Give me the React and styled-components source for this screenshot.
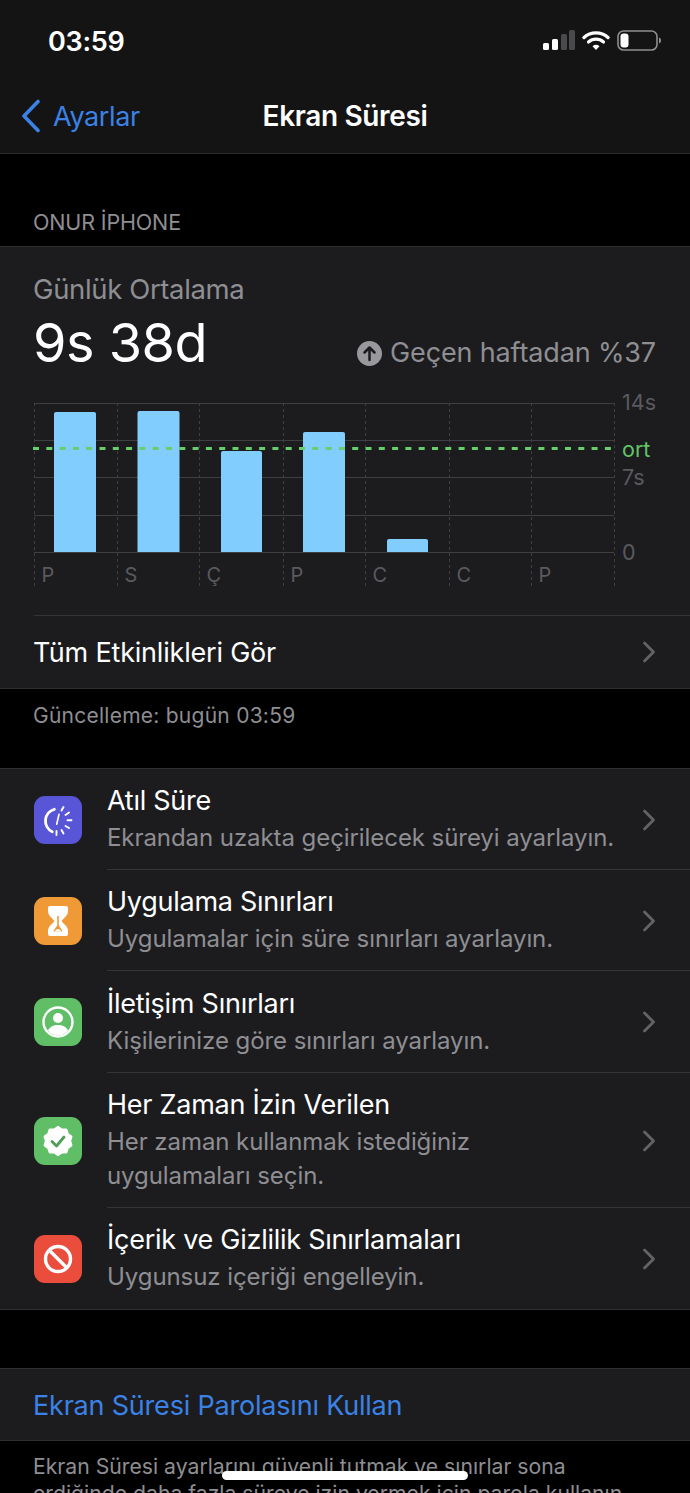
import React from "react";
import styled, { createGlobalStyle } from "styled-components";

const Global = createGlobalStyle`
  html, body { margin: 0; padding: 0; background: #000; }
  body { font-family: Inter, "Noto Sans", "Liberation Sans", sans-serif; -webkit-font-smoothing: antialiased; }
`;

const Page = styled.div`
  position: relative;
  width: 690px;
  height: 1493px;
  overflow: hidden;
  background: #000;
`;
const TopBar = styled.header`
  height: 153px;
  background: #141415;
  border-bottom: 1px solid #2c2c2e;
  display: flex;
  flex-direction: column;
`;
const StatusBar = styled.div`
  height: 82px;
  display: flex;
  align-items: center;
  justify-content: space-between;
  padding: 0 29px 0 48px;
`;
const Clock = styled.span`
  color: #fff;
  font-size: 27px;
  font-weight: 600;
  letter-spacing: -0.3px;
`;
const NavBar = styled.nav`
  position: relative;
  height: 70px;
  padding-bottom: 2px;
  box-sizing: border-box;
  display: flex;
  align-items: center;
  justify-content: center;
`;
const Back = styled.div`
  position: absolute;
  left: 21px;
  top: 17px;
  display: flex;
  align-items: center;
  gap: 12px;
  color: #3b82e6;
  font-size: 27px;
  letter-spacing: -0.4px;
`;
const NavTitle = styled.h1`
  margin: 0;
  color: #fff;
  font-size: 28px;
  font-weight: 600;
  letter-spacing: -0.35px;
`;
const SectionHead = styled.div`
  height: 92px;
  box-sizing: border-box;
  padding: 55px 33px 0;
  color: #8e8e93;
  font-size: 21.5px;
  line-height: 26px;
  letter-spacing: -0.15px;
`;
const Card = styled.section`
  background: #1c1c1e;
  border-top: 1px solid #2f2f31;
  border-bottom: 1px solid #2f2f31;
`;
const Summary = styled.div`
  padding: 25px 34px 0 33px;
`;
const Muted = styled.div`
  color: #8e8e93;
  font-size: 27.5px;
  line-height: 34px;
  letter-spacing: -0.36px;
`;
const SummaryRow = styled.div`
  display: flex;
  align-items: flex-end;
  justify-content: space-between;
  height: 67px;
`;
const BigTime = styled.div`
  color: #fff;
  font-size: 54px;
  line-height: 60px;
  font-weight: 400;
  letter-spacing: -0.5px;
`;
const Delta = styled.div`
  display: flex;
  align-items: center;
  gap: 8px;
  color: #8e8e93;
  font-size: 27px;
  line-height: 34px;
  letter-spacing: -0.15px;
  margin-bottom: 3px;
`;
const ChartWrap = styled.div`
  margin-top: 17px;
  height: 225px;
`;
const ChartSvg = styled.svg`
  display: block;
  font-family: Inter, "Noto Sans", sans-serif;
`;
const SeeAll = styled.div`
  margin-left: 34px;
  height: 72px;
  padding-right: 34px;
  border-top: 1px solid #343436;
  display: flex;
  align-items: center;
  justify-content: space-between;
  color: #fff;
  font-size: 27px;
  letter-spacing: -0.2px;
  text-indent: -1px;
`;
const Note = styled.div`
  height: 79px;
  box-sizing: border-box;
  padding: 14px 33px 0;
  color: #8e8e93;
  font-size: 21px;
  line-height: 26px;
  letter-spacing: 0.25px;
`;
const RowList = styled.section`
  background: #1c1c1e;
  border-top: 1px solid #2f2f31;
  border-bottom: 1px solid #2f2f31;
`;
const Row = styled.div`
  display: flex;
  align-items: center;
  box-sizing: border-box;
  height: ${(p) => p.$h}px;
  padding: 0 34px;
  position: relative;
  &:not(:last-child)::after {
    content: "";
    position: absolute;
    left: 107px;
    right: 0;
    bottom: 0;
    height: 1px;
    background: #343436;
  }
`;
const IconBox = styled.div`
  width: 48px;
  height: 48px;
  border-radius: 11px;
  background: ${(p) => p.$bg};
  display: flex;
  align-items: center;
  justify-content: center;
  flex: none;
`;
const RowText = styled.div`
  flex: 1;
  margin-left: 25px;
`;
const RowTitle = styled.div`
  color: #fff;
  font-size: 27px;
  line-height: 34px;
  letter-spacing: -0.26px;
`;
const RowSub = styled.div`
  color: #8e8e93;
  font-size: 24px;
  line-height: 34px;
  margin-top: 3px;
  letter-spacing: -0.07px;
  white-space: nowrap;
`;
const Gap = styled.div`
  height: 58px;
`;
const LinkRow = styled.div`
  height: 71px;
  box-sizing: border-box;
  padding: 2px 33px 0;
  display: flex;
  align-items: center;
  color: #3b82e6;
  font-size: 27px;
  letter-spacing: -0.2px;
`;
const Foot = styled.p`
  margin: 0;
  padding: 12px 33px 0;
  box-sizing: border-box;
  color: #8e8e93;
  font-size: 21.2px;
  line-height: 27px;
  white-space: nowrap;
`;
const HomeBar = styled.div`
  position: absolute;
  left: 222px;
  top: 1471px;
  width: 246px;
  height: 9px;
  border-radius: 5px;
  background: #fff;
`;

const Chevron = () => (
  <svg width="14" height="22" viewBox="0 0 14 22" fill="none">
    <path d="M2.5 2l9 9-9 9" stroke="#636366" strokeWidth="2.8" strokeLinecap="round" strokeLinejoin="round" />
  </svg>
);

const StatusIcons = () => (
  <svg width="118" height="24" viewBox="0 0 118 24" fill="none">
    <rect x="0" y="14" width="6" height="7" rx="1.5" fill="#fff" />
    <rect x="9" y="10" width="6" height="11" rx="1.5" fill="#fff" />
    <rect x="18" y="5" width="6" height="16" rx="1.5" fill="#4a4a4c" />
    <rect x="26" y="1" width="6" height="20" rx="1.5" fill="#4a4a4c" />
    <path d="M41 8.5a18 18 0 0 1 24 0" stroke="#fff" strokeWidth="3.4" strokeLinecap="round" />
    <path d="M45.5 13a11.5 11.5 0 0 1 15 0" stroke="#fff" strokeWidth="3.2" strokeLinecap="round" />
    <path d="M49.5 17.3l3.5 3.7 3.5-3.7a5.5 5.5 0 0 0-7 0z" fill="#fff" />
    <rect x="75" y="2" width="39" height="19" rx="5.5" stroke="#8e8e93" strokeWidth="1.6" />
    <rect x="77.5" y="4.5" width="8" height="14" rx="3" fill="#fff" />
    <path d="M116 8.5c1.5.4 2 1.6 2 3s-.5 2.6-2 3z" fill="#8e8e93" />
  </svg>
);

const BackIcon = () => (
  <svg width="20" height="34" viewBox="0 0 20 34" fill="none">
    <path d="M17 2.5L3 17l14 14.5" stroke="#3b82e6" strokeWidth="3.6" strokeLinecap="round" strokeLinejoin="round" />
  </svg>
);

const UpIcon = () => (
  <svg width="25" height="25" viewBox="0 0 25 25">
    <circle cx="12.5" cy="12.5" r="12.5" fill="#98989d" />
    <path d="M12.5 19V7M7.5 11.5l5-5 5 5" stroke="#1c1c1e" strokeWidth="2.5" fill="none" strokeLinecap="round" strokeLinejoin="round" />
  </svg>
);

const DowntimeIcon = () => (
  <svg width="36" height="36" viewBox="0 0 36 36" fill="none" stroke="#fff" strokeLinecap="round">
    <path d="M14.3 7.3A12 12 0 0 0 12.3 29.7" strokeWidth="2.8" />
    <path d="M19 12.300L16.700 22.300" strokeWidth="1.6" />
    <g strokeWidth="1.9">
      <path d="M21.500 8.500L23.500 5" />
      <path d="M25.500 13L29 10.500" />
      <path d="M27.500 18.300H31.500" />
      <path d="M25.500 24L29 26" />
      <path d="M21.500 28L23.500 31.500" />
      <path d="M16.500 29V33" />
    </g>
  </svg>
);

const HourglassIcon = () => (
  <svg width="22" height="32" viewBox="0 0 22 32">
    <path
      fill="#fff"
      d="M3 1h16a2 2 0 0 1 2 2v3c0 5-4.500 7-6.500 10 2 3 6.500 5 6.500 10v3a2 2 0 0 1-2 2H3a2 2 0 0 1-2-2v-3c0-5 4.500-7 6.500-10C5.500 13 1 11 1 6V3a2 2 0 0 1 2-2z"
    />
    <path fill="#f09a37" d="M10.200 11h1.600v9c.4 2 2.500 3 3.700 6.500h-9C7.700 23 9.800 22 10.200 20z" />
    <path fill="#fff" d="M7.500 26.500c1-1.500 2.200-2.200 3.500-2.500 1.300.3 2.500 1 3.500 2.500z" />
  </svg>
);

const ContactIcon = () => (
  <svg width="36" height="36" viewBox="0 0 36 36" fill="none">
    <circle cx="18" cy="18" r="14.500" stroke="#fff" strokeWidth="2.400" />
    <circle cx="18" cy="14" r="5" fill="#fff" />
    <path d="M8 26.500c2-4 5.500-5.500 10-5.500s8 1.500 10 5.500c-2.500 3.200-6 5-10 5s-7.500-1.800-10-5z" fill="#fff" />
  </svg>
);

const lobes = 10;
const badgePoints = Array.from({ length: lobes * 2 }, (_, i) => {
  const r = i % 2 ? 11.6 : 13.6;
  const a = (Math.PI * i) / lobes - Math.PI / 2;
  return `${(16 + r * Math.cos(a)).toFixed(2)},${(16 + r * Math.sin(a)).toFixed(2)}`;
}).join(" ");

const BadgeIcon = () => (
  <svg width="32" height="32" viewBox="0 0 32 32" fill="none">
    <polygon points={badgePoints} fill="#fff" stroke="#fff" strokeWidth="3" strokeLinejoin="round" />
    <path d="M10 16.500l4.500 4.500 7.500-9" stroke="#4f9f58" strokeWidth="2.800" strokeLinecap="round" strokeLinejoin="round" />
  </svg>
);

const BlockIcon = () => (
  <svg width="30" height="30" viewBox="0 0 30 30" fill="none" stroke="#fff" strokeWidth="3.400">
    <circle cx="15" cy="15" r="12.500" />
    <path d="M6.500 6.500l17 17" />
  </svg>
);

const xs = [34, 117, 199, 283, 365, 449, 531, 614];
const ys = [403, 440, 477, 515, 552];
const bars = [
  [54, 96, 412],
  [137.5, 179.5, 411],
  [221, 262, 451],
  [303, 345, 432],
  [387, 428, 539],
];
const days = ["P", "S", "Ç", "P", "C", "C", "P"];
const yLabels = [["14s", 410], ["7s", 485], ["0", 560]];
const OFF = 390;

const Chart = () => (
  <ChartSvg width="690" height="216" viewBox={`0 ${OFF} 690 216`}>
    {xs.map((x) => (
      <line key={x} x1={x + 0.5} x2={x + 0.5} y1="403" y2="586" stroke="#3f3f41" strokeWidth="1" strokeDasharray="3 3" />
    ))}
    {ys.map((y) => (
      <line key={y} x1="34" x2="614" y1={y + 0.5} y2={y + 0.5} stroke="#3f3f41" strokeWidth="1" />
    ))}
    {bars.map(([a, b, t]) => (
      <path
        key={a}
        fill="#81cdfd"
        d={`M${a} 552V${t + 2}a2 2 0 0 1 2-2H${b - 2}a2 2 0 0 1 2 2V552z`}
      />
    ))}
    <line x1="33" x2="614" y1="448.500" y2="448.500" stroke="#66cf6c" strokeWidth="3" strokeDasharray="6 7.300" />
    {yLabels.map(([t, y]) => (
      <text key={t} x="622" y={y} fill="#5a5a5e" fontSize="21.500">{t}</text>
    ))}
    <text x="622" y="456.500" fill="#62c466" fontSize="21.500">ort</text>
    {days.map((d, i) => (
      <text key={i} x={xs[i] + 7.500} y="582" fill="#5a5a5e" fontSize="20">{d}</text>
    ))}
  </ChartSvg>
);

const rows = [
  { h: 101, bg: "#5856d6", icon: <DowntimeIcon />, title: "Atıl Süre", sub: ["Ekrandan uzakta geçirilecek süreyi ayarlayın."] },
  { h: 101, bg: "#f09a37", icon: <HourglassIcon />, title: "Uygulama Sınırları", sub: ["Uygulamalar için süre sınırları ayarlayın."] },
  { h: 102, bg: "#5fbe66", icon: <ContactIcon />, title: "İletişim Sınırları", sub: ["Kişilerinize göre sınırları ayarlayın."] },
  { h: 135, bg: "#5fbe66", icon: <BadgeIcon />, title: "Her Zaman İzin Verilen", sub: ["Her zaman kullanmak istediğiniz", "uygulamaları seçin."] },
  { h: 101, bg: "#eb4d3d", icon: <BlockIcon />, title: "İçerik ve Gizlilik Sınırlamaları", sub: ["Uygunsuz içeriği engelleyin."] },
];

export default function App() {
  return (
    <Page>
      <Global />
      <TopBar>
        <StatusBar>
          <Clock>03:59</Clock>
          <StatusIcons />
        </StatusBar>
        <NavBar>
          <Back>
            <BackIcon />
            <span>Ayarlar</span>
          </Back>
          <NavTitle>Ekran Süresi</NavTitle>
        </NavBar>
      </TopBar>
      <SectionHead>ONUR İPHONE</SectionHead>
      <Card>
        <Summary>
          <Muted>Günlük Ortalama</Muted>
          <SummaryRow>
            <BigTime>9s 38d</BigTime>
            <Delta>
              <UpIcon />
              Geçen haftadan %37
            </Delta>
          </SummaryRow>
        </Summary>
        <ChartWrap>
          <Chart />
        </ChartWrap>
        <SeeAll>
          Tüm Etkinlikleri Gör
          <Chevron />
        </SeeAll>
      </Card>
      <Note>Güncelleme: bugün 03:59</Note>
      <RowList>
        {rows.map((r) => (
          <Row key={r.title} $h={r.h}>
            <IconBox $bg={r.bg}>{r.icon}</IconBox>
            <RowText>
              <RowTitle>{r.title}</RowTitle>
              <RowSub>
                {r.sub.map((s) => (
                  <div key={s}>{s}</div>
                ))}
              </RowSub>
            </RowText>
            <Chevron />
          </Row>
        ))}
      </RowList>
      <Gap />
      <RowList>
        <LinkRow>Ekran Süresi Parolasını Kullan</LinkRow>
      </RowList>
      <Foot>
        Ekran Süresi ayarlarını güvenli tutmak ve sınırlar sona
        <br />
        erdiğinde daha fazla süreye izin vermek için parola kullanın.
      </Foot>
      <HomeBar />
    </Page>
  );
}
